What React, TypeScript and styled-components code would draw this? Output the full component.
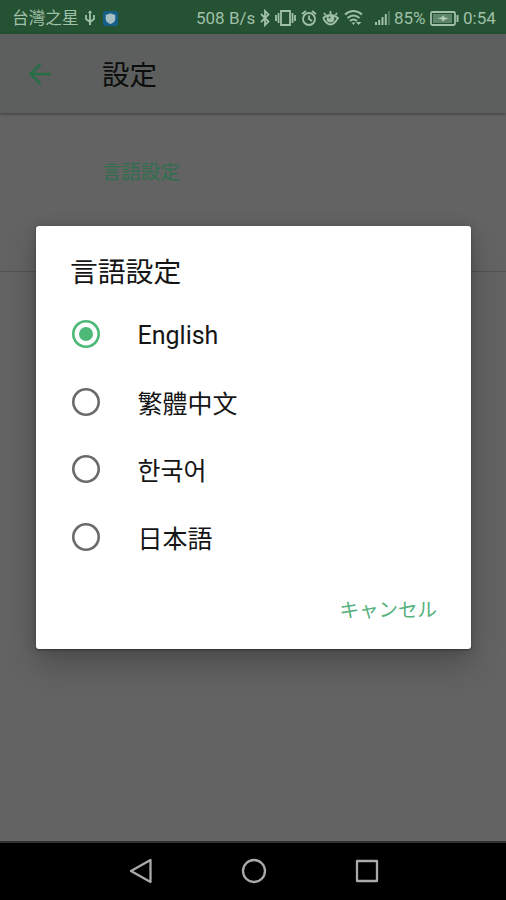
import React, { useState } from "react";
import styled, { createGlobalStyle } from "styled-components";

const GlobalStyle = createGlobalStyle`
  body { margin: 0; background: #636363; }
  * { box-sizing: border-box; }
`;

const Screen = styled.div`
  position: relative;
  display: flex;
  flex-direction: column;
  width: 506px;
  height: 900px;
  overflow: hidden;
  background: #636363;
  font-family: Roboto, "Noto Sans CJK JP", sans-serif;
`;

const StatusBar = styled.header`
  display: flex;
  align-items: center;
  flex: 0 0 34px;
  padding: 2px 0 0 12px;
  background: #245232;
  color: #a0c0a8;
  font-size: 17px;
  line-height: 32px;
  white-space: nowrap;
`;

const StatusText = styled.span<{ $width: number; $gap?: number }>`
  flex: 0 0 ${(p) => p.$width}px;
  width: ${(p) => p.$width}px;
  margin-left: ${(p) => p.$gap ?? 0}px;
`;

const Carrier = styled(StatusText)`
  margin-top: -2px;
  font-family: "Noto Sans CJK TC", sans-serif;
  font-size: 16.7px;
`;

const StatusIcon = styled.svg<{ $gap: number }>`
  flex: none;
  margin-left: ${(p) => p.$gap}px;
  fill: none;
  stroke: #a0c0a8;
  stroke-width: 1.8;
  overflow: visible;
`;

const AppBar = styled.div`
  display: flex;
  align-items: center;
  flex: 0 0 79px;
  padding-left: 28px;
  background: #5c5f5d;
  box-shadow: 0 1px 3px rgba(0, 0, 0, 0.4);
`;

const BackIcon = styled.svg`
  flex: none;
  fill: none;
  stroke: #276e46;
  stroke-width: 2.5;
`;

const PageTitle = styled.h1`
  margin: 4px 0 0 50px;
  color: #0c0e0d;
  font-size: 27.5px;
  line-height: 40px;
  font-weight: 400;
`;

const Preferences = styled.main`
  flex: 1;
`;

const Section = styled.section`
  height: 159px;
  padding: 45px 0 0 102px;
  border-bottom: 1px solid #535353;
  color: #2f6f4e;
  font-size: 19.5px;
  line-height: 30px;
`;

const NavBar = styled.nav`
  display: flex;
  justify-content: center;
  align-items: center;
  gap: 88px;
  flex: 0 0 59px;
  padding: 0 0 1px 1px;
  background: #000;
  border-top: 2px solid #303030;
`;

const NavIcon = styled.svg`
  fill: none;
  stroke: #aaa;
  stroke-width: 2.3;
  stroke-linejoin: round;
`;

const Dialog = styled.div`
  position: absolute;
  left: 36px;
  top: 226px;
  display: flex;
  flex-direction: column;
  width: 435px;
  height: 423px;
  padding: 27px 34px 0;
  border-radius: 3px;
  background: #fff;
  box-shadow: 0 16px 30px rgba(0, 0, 0, 0.22), 0 0 12px rgba(0, 0, 0, 0.14),
    0 1px 2px rgba(0, 0, 0, 0.35);
`;

const DialogTitle = styled.h2`
  margin: 0;
  color: #151515;
  font-size: 27.8px;
  line-height: 40px;
  font-weight: 400;
`;

const Options = styled.div`
  padding-top: 7.5px;
`;

const Option = styled.label`
  display: flex;
  align-items: center;
  height: 67.5px;
  cursor: pointer;
`;

const HiddenRadio = styled.input`
  position: absolute;
  opacity: 0;
  pointer-events: none;
`;

const RadioMark = styled.span<{ $checked: boolean }>`
  display: flex;
  align-items: center;
  justify-content: center;
  width: 28px;
  height: 28px;
  margin: 0 37.5px 0 2px;
  box-shadow: inset 0 0 0 2.6px ${(p) => (p.$checked ? "#4eb879" : "#6b6b6b")};
  border-radius: 50%;

  &::after {
    content: "";
    width: 14px;
    height: 14px;
    border-radius: 50%;
    background: ${(p) => (p.$checked ? "#4eb879" : "transparent")};
  }
`;

const OptionLabel = styled.span<{ $font: string; $drop: number }>`
  padding-top: ${(p) => p.$drop}px;
  color: #151515;
  font-family: ${(p) => p.$font}, sans-serif;
  font-size: 25px;
  line-height: 36px;
`;

const CancelButton = styled.button`
  align-self: flex-end;
  margin-top: 23px;
  padding: 0;
  border: 0;
  background: none;
  color: #56b17c;
  font: 400 19.5px/30px "Noto Sans CJK JP", sans-serif;
`;

const languages = [
  { label: "English", font: "Roboto", drop: 3 },
  { label: "繁體中文", font: '"Noto Sans CJK TC"', drop: 0 },
  { label: "한국어", font: '"Noto Sans CJK KR"', drop: 0 },
  { label: "日本語", font: '"Noto Sans CJK JP"', drop: 0 },
];

function StatusIcons() {
  return (
    <>
      <StatusIcon $gap={6} width="10" height="16" viewBox="0 0 10 16">
        <path d="M5 2v12M1 5v4l4 3 4-3V5" />
        <path d="M5 0l2 3H3zM4 13h2v2H4z" fill="#a0c0a8" stroke="none" />
      </StatusIcon>
      <StatusIcon $gap={8} width="15" height="15" viewBox="0 0 15 15">
        <rect width="15" height="15" rx="2.5" fill="#155f89" stroke="none" />
        <path d="M7.5 2.3l4.8 1.8v4c0 2.5-2.2 4-4.8 5-2.6-1-4.8-2.5-4.8-5v-4z" fill="#a5c0c3" stroke="none" />
      </StatusIcon>
      <StatusText $width={59} $gap={78}>508 B/s</StatusText>
      <StatusIcon $gap={5} width="10" height="16" viewBox="0 0 10 16">
        <path d="M1 4l7.5 7.5L5 15V1l3.5 3.5L1 12" />
      </StatusIcon>
      <StatusIcon $gap={5} width="21" height="16" viewBox="0 0 21 16">
        <path d="M6 1h9v14H6zM3.5 3v10M17.5 3v10M1 5v6M20 5v6" />
      </StatusIcon>
      <StatusIcon $gap={5} width="16" height="16" viewBox="0 0 16 16">
        <circle cx="8" cy="9" r="6" />
        <path d="M8 5.5V9l3 2M1 4l4-3M15 4l-4-3" />
      </StatusIcon>
      <StatusIcon $gap={5} width="17" height="16" viewBox="0 0 17 16">
        <path d="M1 8q7.500-6 15 0-7.500 13-15 0M3.500 5L2 3M8.500 4V1M13.500 5L15 3" />
        <circle cx="8.500" cy="8.500" r="3" fill="#a0c0a8" />
        <circle cx="7.500" cy="7.500" r="1" fill="#245232" stroke="none" />
      </StatusIcon>
      <StatusIcon $gap={4.5} width="19" height="16" viewBox="0 0 19 16">
        <path d="M1 4.500q8.500-7 17 0M3.500 8q6-5 12 0M6 11q3.500-3 7 0" strokeWidth="2" />
        <path d="M7.500 12.500h4L9.500 15zM12 12l2.500 3 3-3z" fill="#a0c0a8" stroke="none" />
      </StatusIcon>
      <StatusIcon $gap={12.5} width="15" height="14" viewBox="0 0 15 14">
        <path d="M1 14v-3M4.200 14V9M7.500 14V6M10.800 14V3" strokeWidth="2" />
        <path d="M14 14V0" strokeWidth="2" opacity=".35" />
      </StatusIcon>
      <StatusText $width={33} $gap={4}>85%</StatusText>
      <StatusIcon $gap={3} width="29" height="15" viewBox="0 0 29 15">
        <rect x="1" y="1" width="24" height="13" rx="1.500" />
        <path d="M3 3h19v9H3z" fill="#5f8669" stroke="none" />
        <path d="M27.500 4v7" strokeWidth="2" />
        <path d="M7 7.500l5-1.500 1.500-2 1 2.500 4 .5-4 2-2 1.500-1-2.500z" fill="#b1cbb6" stroke="none" />
      </StatusIcon>
      <StatusText $width={36} $gap={4}>0:54</StatusText>
    </>
  );
}

export default function App() {
  const [selected, setSelected] = useState("English");

  return (
    <>
      <GlobalStyle />
      <Screen>
        <StatusBar>
          <Carrier $width={67}>台灣之星</Carrier>
          <StatusIcons />
        </StatusBar>
        <AppBar>
          <BackIcon width="24" height="24" viewBox="0 0 24 24">
            <path d="M23 12H3M12.500 2L2.500 12l10 10" />
          </BackIcon>
          <PageTitle>設定</PageTitle>
        </AppBar>
        <Preferences>
          <Section>言語設定</Section>
        </Preferences>
        <NavBar>
          <NavIcon width="24" height="26" viewBox="0 0 24 26">
            <path d="M21.500 2v22L2 13z" />
          </NavIcon>
          <NavIcon width="26" height="26" viewBox="0 0 26 26">
            <circle cx="13" cy="13" r="11" />
          </NavIcon>
          <NavIcon width="24" height="26" viewBox="0 0 24 26">
            <path d="M2 3h20v20H2z" />
          </NavIcon>
        </NavBar>
        <Dialog role="dialog" aria-labelledby="language-title">
          <DialogTitle id="language-title">言語設定</DialogTitle>
          <Options role="radiogroup">
            {languages.map(({ label, font, drop }) => (
              <Option key={label}>
                <HiddenRadio
                  type="radio"
                  name="language"
                  checked={selected === label}
                  onChange={() => setSelected(label)}
                />
                <RadioMark $checked={selected === label} />
                <OptionLabel $font={font} $drop={drop}>{label}</OptionLabel>
              </Option>
            ))}
          </Options>
          <CancelButton>キャンセル</CancelButton>
        </Dialog>
      </Screen>
    </>
  );
}
